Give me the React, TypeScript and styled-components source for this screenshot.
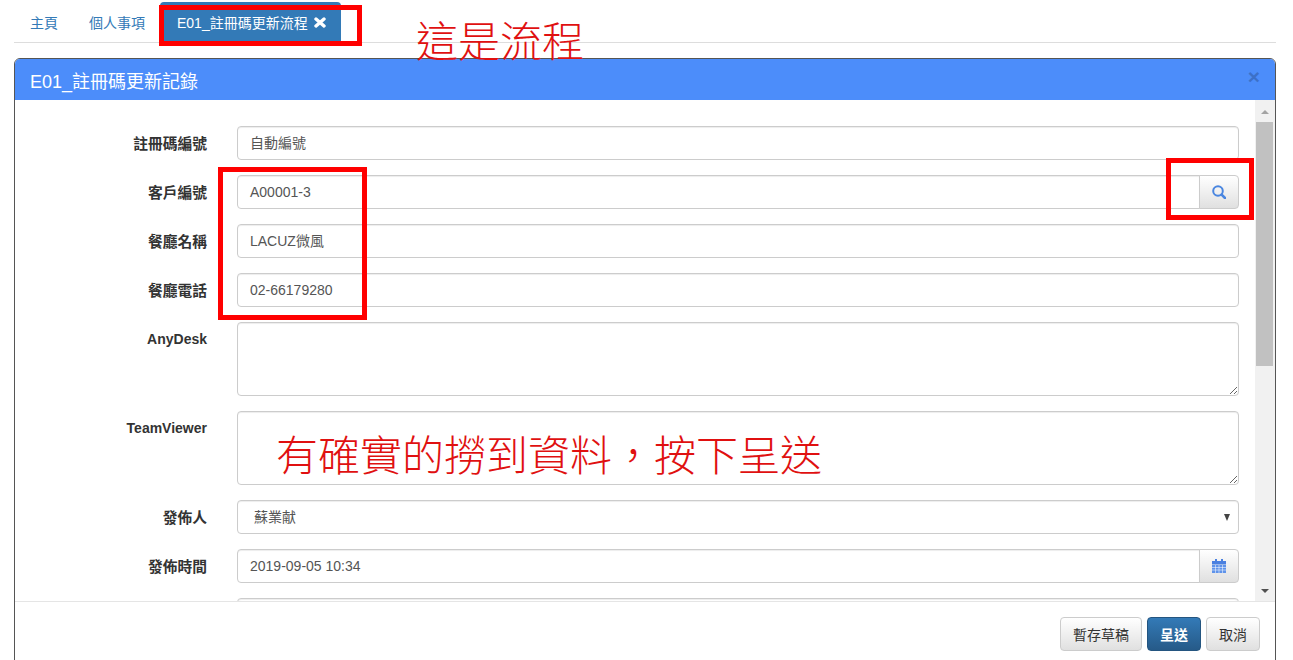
import styled, { createGlobalStyle } from "styled-components";

const SANS = `"Liberation Sans", "Noto Sans CJK TC", sans-serif`;

const Global = createGlobalStyle`
  html, body {
    margin: 0;
    height: 100%;
    overflow: hidden;
    background: #fff;
  }
  body {
    font-family: ${SANS};
    font-size: 14px;
    color: #333;
  }
`;

const Page = styled.div`
  position: relative;
  width: 1293px;
  height: 660px;
  overflow: hidden;
`;

const Tabs = styled.ul`
  display: flex;
  list-style: none;
  margin: 0 17px 0 14px;
  padding: 2px 0 0;
  height: 43px;
  box-sizing: border-box;
  border-bottom: 1px solid #ddd;
`;

const Tab = styled.li<{ $active?: boolean }>`
  display: flex;
  align-items: center;
  gap: 6px;
  box-sizing: border-box;
  height: 40px;
  padding: ${(p) => (p.$active ? "0 15px 0 17px" : "0 16px")};
  margin-right: ${(p) => (p.$active ? "0" : "-1px")};
  border-radius: 4px 4px 0 0;
  background: ${(p) => (p.$active ? "#337ab7" : "transparent")};
  color: ${(p) => (p.$active ? "#fff" : "#337ab7")};
`;

const Modal = styled.section`
  margin: 15px 0 0 14px;
  width: 1262px;
  height: 640px;
  box-sizing: border-box;
  border: 1px solid #555;
  border-radius: 6px 6px 0 0;
  display: flex;
  flex-direction: column;
  overflow: hidden;
`;

const ModalHeader = styled.header`
  flex: none;
  height: 41px;
  display: flex;
  align-items: center;
  justify-content: space-between;
  padding: 0 15px;
  background: #4c8dfa;
  color: #fff;
`;

const ModalTitle = styled.h4`
  margin: 0;
  font-size: 18px;
  font-weight: 400;
`;

const Close = styled.span`
  font-size: 21px;
  font-weight: 700;
  line-height: 1;
  color: #000;
  opacity: 0.2;
  margin-top: -6px;
`;

const ModalBody = styled.div`
  flex: none;
  height: 502px;
  display: flex;
  overflow: hidden;
  border-bottom: 1px solid #e5e5e5;
  box-sizing: border-box;
`;

const Form = styled.form`
  flex: 1;
  margin: 0;
  padding-top: 26px;
  overflow: hidden;
`;

const Row = styled.div`
  display: grid;
  grid-template-columns: 192px 1002px;
  column-gap: 30px;
  margin-bottom: 15px;
`;

const Label = styled.label<{ $latin?: boolean }>`
  text-align: right;
  padding-top: ${(p) => (p.$latin ? "7px" : "8px")};
  font-size: ${(p) => (p.$latin ? "14px" : "14.75px")};
  font-weight: 700;
  line-height: 20px;
  color: #333;
`;

const Control = styled.div<{ $addon?: boolean }>`
  height: 34px;
  box-sizing: border-box;
  padding: 6px 12px;
  line-height: 20px;
  color: #555;
  background: #fff;
  border: 1px solid #ccc;
  border-radius: ${(p) => (p.$addon ? "4px 0 0 4px" : "4px")};
  box-shadow: inset 0 1px 1px rgba(0, 0, 0, 0.075);
  flex: 1;
`;

const TextArea = styled.textarea`
  display: block;
  width: 100%;
  height: 74px;
  box-sizing: border-box;
  border: 1px solid #ccc;
  border-radius: 4px;
  box-shadow: inset 0 1px 1px rgba(0, 0, 0, 0.075);
  padding: 6px 12px;
  margin: 0;
  outline: none;
`;

const SelectBox = styled(Control)`
  display: flex;
  justify-content: space-between;
  align-items: center;
  padding: 0 8px 0 16px;
`;

const Caret = styled.span`
  width: 0;
  height: 0;
  border-left: 3.5px solid transparent;
  border-right: 3.5px solid transparent;
  border-top: 7px solid #444;
`;

const Group = styled.div`
  display: flex;
`;

const Addon = styled.button`
  flex: none;
  width: 40px;
  height: 34px;
  margin-left: -1px;
  padding: 0;
  display: flex;
  align-items: center;
  justify-content: center;
  border: 1px solid #ccc;
  border-radius: 0 4px 4px 0;
  background: linear-gradient(to bottom, #fff, #e0e0e0);
`;

const Scrollbar = styled.div`
  flex: none;
  width: 20px;
  background: #f1f1f1;
  padding: 1px 2px 0 1px;
  box-sizing: border-box;
  display: flex;
  flex-direction: column;
  align-items: stretch;
`;

const ArrowSlot = styled.div`
  flex: none;
  height: 21px;
  display: flex;
  align-items: center;
  justify-content: center;
`;

const Arrow = styled.span<{ $down?: boolean }>`
  width: 0;
  height: 0;
  border-left: 4px solid transparent;
  border-right: 4px solid transparent;
  ${(p) =>
    p.$down ? "border-top: 4px solid #505050;" : "border-bottom: 4px solid #a3a3a3;"}
`;

const Thumb = styled.div`
  flex: none;
  height: 244px;
  background: #c1c1c1;
`;

const Track = styled.div`
  flex: 1;
`;

const ModalFooter = styled.footer`
  flex: none;
  display: flex;
  justify-content: flex-end;
  gap: 5px;
  padding: 15px 15px 15px 0;
`;

const Button = styled.button<{ $primary?: boolean }>`
  height: 34px;
  padding: 0 12px;
  font-family: ${SANS};
  font-size: 14px;
  font-weight: ${(p) => (p.$primary ? 700 : 400)};
  border-radius: 4px;
  border: 1px solid ${(p) => (p.$primary ? "#245580" : "#ccc")};
  color: ${(p) => (p.$primary ? "#fff" : "#333")};
  background: ${(p) =>
    p.$primary
      ? "linear-gradient(to bottom, #337ab7, #265a88)"
      : "linear-gradient(to bottom, #fff, #e0e0e0)"};
`;

const Mark = styled.div`
  position: absolute;
  box-sizing: border-box;
  border: 5px solid #f00;
`;

const Note = styled.div`
  position: absolute;
  font-family: "Noto Sans CJK TC", sans-serif;
  font-weight: 300;
  font-size: 42px;
  line-height: 1;
  color: #e01010;
  white-space: nowrap;
`;

const TabMark = styled(Mark)`
  left: 159px;
  top: 5px;
  width: 203px;
  height: 41px;
`;

const FieldsMark = styled(Mark)`
  left: 218px;
  top: 167px;
  width: 149px;
  height: 153px;
`;

const SearchMark = styled(Mark)`
  left: 1166px;
  top: 158px;
  width: 88px;
  height: 62px;
`;

const FlowNote = styled(Note)`
  left: 416px;
  top: 18px;
`;

const DataNote = styled(Note)`
  left: 276px;
  top: 432px;
`;

const RemoveIcon = () => (
  <svg width="12" height="11" viewBox="0 0 12 11">
    <path
      d="M2 2 L10 9 M10 2 L2 9"
      stroke="#fff"
      strokeWidth="3.4"
      strokeLinecap="round"
    />
  </svg>
);

const SearchIcon = () => (
  <svg width="14" height="14" viewBox="0 0 14 14" fill="none">
    <circle cx="6" cy="6" r="4.8" stroke="#4a86e0" strokeWidth="2" />
    <path d="M9.6 9.6 L13 13" stroke="#4a86e0" strokeWidth="2.6" strokeLinecap="round" />
  </svg>
);

const CalendarIcon = () => (
  <svg width="14" height="14" viewBox="0 0 14 14">
    <path d="M3 0h2v2h4V0h2v2h3v3.5H0V2h3z" fill="#4a80e0" />
    <rect y="6" width="14" height="8" fill="#5f93ea" />
    <path
      d="M0 8.5H14M0 11H14M3.5 6V14M7 6V14M10.5 6V14"
      stroke="#fff"
      strokeOpacity="0.65"
      strokeWidth="0.8"
    />
  </svg>
);

export default function App() {
  return (
    <Page>
      <Global />
      <Tabs>
        <Tab>主頁</Tab>
        <Tab>個人事項</Tab>
        <Tab $active>
          E01_註冊碼更新流程
          <RemoveIcon />
        </Tab>
      </Tabs>
      <Modal>
        <ModalHeader>
          <ModalTitle>E01_註冊碼更新記錄</ModalTitle>
          <Close>×</Close>
        </ModalHeader>
        <ModalBody>
          <Form>
            <Row>
              <Label>註冊碼編號</Label>
              <Control>自動編號</Control>
            </Row>
            <Row>
              <Label>客戶編號</Label>
              <Group>
                <Control $addon>A00001-3</Control>
                <Addon type="button">
                  <SearchIcon />
                </Addon>
              </Group>
            </Row>
            <Row>
              <Label>餐廳名稱</Label>
              <Control>LACUZ微風</Control>
            </Row>
            <Row>
              <Label>餐廳電話</Label>
              <Control>02-66179280</Control>
            </Row>
            <Row>
              <Label $latin>AnyDesk</Label>
              <TextArea />
            </Row>
            <Row>
              <Label $latin>TeamViewer</Label>
              <TextArea />
            </Row>
            <Row>
              <Label>發佈人</Label>
              <SelectBox>
                蘇業献
                <Caret />
              </SelectBox>
            </Row>
            <Row>
              <Label>發佈時間</Label>
              <Group>
                <Control $addon>2019-09-05 10:34</Control>
                <Addon type="button">
                  <CalendarIcon />
                </Addon>
              </Group>
            </Row>
            <Row>
              <Label />
              <Control />
            </Row>
          </Form>
          <Scrollbar>
            <ArrowSlot>
              <Arrow />
            </ArrowSlot>
            <Thumb />
            <Track />
            <ArrowSlot>
              <Arrow $down />
            </ArrowSlot>
          </Scrollbar>
        </ModalBody>
        <ModalFooter>
          <Button>暫存草稿</Button>
          <Button $primary>呈送</Button>
          <Button>取消</Button>
        </ModalFooter>
      </Modal>
      <TabMark />
      <FieldsMark />
      <SearchMark />
      <FlowNote>這是流程</FlowNote>
      <DataNote>{"有確實的撈到資料\uFF0C按下呈送"}</DataNote>
    </Page>
  );
}
